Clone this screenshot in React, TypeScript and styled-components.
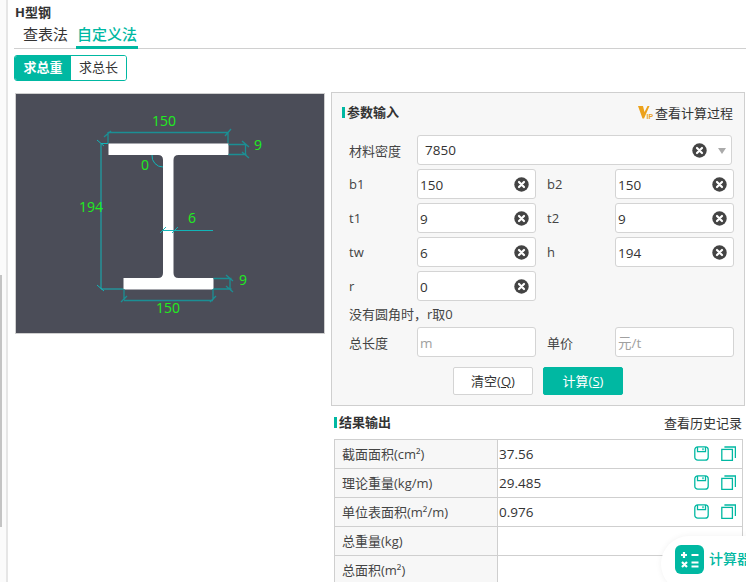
import React from 'react';
import styled, { createGlobalStyle } from 'styled-components';

const teal = '#00b8a2';
const dim = '#1b8f94';
const cyan = '#12b5b8';
const green = '#1fee1f';

const GlobalStyle = createGlobalStyle`
  html, body { margin: 0; padding: 0; background: #fff; }
  body { font-family: "Open Sans", "Noto Sans CJK SC", sans-serif; font-size: 13px; color: #333; }
  * { box-sizing: border-box; }
`;

const ClearIcon = () => (
  <svg width="15" height="15" viewBox="0 0 15 15">
    <circle cx="7.5" cy="7.5" r="7.2" fill="#444" />
    <path d="M5 5l5 5M10 5l-5 5" stroke="#fff" strokeWidth="2.2" strokeLinecap="round" />
  </svg>
);

const SaveIcon = () => (
  <svg width="15" height="15" viewBox="0 0 15 15" fill="none" stroke={teal} strokeWidth="1.3">
    <rect x="0.8" y="0.8" width="13.4" height="13.4" rx="3" />
    <path d="M3.500 1v4.600h8V1M9 2.200v2" />
  </svg>
);

const CopyIcon = () => (
  <svg width="15" height="15" viewBox="0 0 15 15" fill="none" stroke={teal} strokeWidth="1.3">
    <rect x="0.8" y="3.400" width="10.600" height="11" />
    <path d="M3.400 1h11v11" />
  </svg>
);

const VipLogo = () => (
  <svg width="18" height="18" viewBox="0 0 18 18">
    <path d="M2 3h5l1.500 6L11.500 3h2L8 15.500H6.500z" fill="#eca21c" />
    <text x="10.500" y="15.500" fontFamily="Liberation Sans" fontWeight="bold" fontSize="7" fill="#eca21c">IP</text>
  </svg>
);

const CalcIcon = () => (
  <svg width="29" height="29" viewBox="0 0 29 29">
    <rect width="29" height="29" rx="6" fill={teal} />
    <path d="M6 10h6M9 7v6M16.500 10h7M7 17l5 5M12 17l-5 5M16.500 17.500h7M16.500 21.500h7" stroke="#fff" strokeWidth="2.200" />
  </svg>
);

const SectionDiagram = () => (
  <DiagramSvg viewBox="0 0 308 239">
    <path
      d="M92.500 49.500H212.500V61H162.500q-5 0-5 5V179q0 5 5 5H197.500V195.500H107.500V184H142q5 0 5-5V66q0-5-5-5H92.500Z"
      fill="#fff"
    />
    <g fill="none" stroke={dim} strokeWidth="1.300">
      <path d="M92 38.500h120M92 38v11M212 38v11M88 43l7-6M209 42l6-7" />
      <path d="M212.500 50.500h18M212.500 60.500h18M229.500 50v11M226 47l7 6M226 58l7 6" />
      <path d="M197.500 184.500h18M197.500 195h18M214 184v11M210 181l7 6M210 192l7 6" />
      <path d="M108 206.500h89M108 195v11M197 195v11M105 208l6-6M194 208l6-6" />
    </g>
    <g fill="none" stroke={cyan} strokeWidth="1">
      <path d="M85 49.500v145.500M85 49.500h7M85 195h22M81 46l7 6M81 191l7 6" />
      <path d="M136 61a11 11 0 0 0 11 12" />
      <path d="M147 136.500h50M144 139l6-6M156 139l6-6" />
    </g>
    <g fontFamily="Open Sans" fontSize="14" fill={green}>
      <DimLabel x="136" y="32">150</DimLabel>
      <DimLabel x="238" y="56">9</DimLabel>
      <DimLabel x="125" y="75.500">0</DimLabel>
      <DimLabel x="63" y="118">194</DimLabel>
      <DimLabel x="172" y="128.700">6</DimLabel>
      <DimLabel x="223" y="191">9</DimLabel>
      <DimLabel x="140" y="218.700">150</DimLabel>
    </g>
  </DiagramSvg>
);

const Field = ({ value, placeholder }: { value?: string; placeholder?: string }) => (
  <InputBox>
    <Input value={value ?? ''} placeholder={placeholder} readOnly />
    {value && <ClearIcon />}
  </InputBox>
);

const results: [string, string][] = [
  ['截面面积(cm²)', '37.56'],
  ['理论重量(kg/m)', '29.485'],
  ['单位表面积(m²/m)', '0.976'],
  ['总重量(kg)', ''],
  ['总面积(m²)', ''],
];

const App = () => (
  <Page>
    <GlobalStyle />
    <Rail>
      <RailMark />
    </Rail>
    <Main>
      <Title>H型钢</Title>
      <Tabs>
        <Tab>查表法</Tab>
        <Tab $active>自定义法</Tab>
      </Tabs>
      <Toggle>
        <ToggleItem $active>求总重</ToggleItem>
        <ToggleItem>求总长</ToggleItem>
      </Toggle>
      <Columns>
        <Diagram>
          <SectionDiagram />
        </Diagram>
        <RightColumn>
          <InputPanel>
            <PanelHead>
              <Heading>参数输入</Heading>
              <HeadLink>
                <VipLogo />
                查看计算过程
              </HeadLink>
            </PanelHead>
            <SelectRow>
              <FieldLabel>材料密度</FieldLabel>
              <SelectBox>
                <SelectValue>7850</SelectValue>
                <ClearIcon />
                <Caret />
              </SelectBox>
            </SelectRow>
            <FieldGrid>
              <FieldLabel>b1</FieldLabel>
              <Field value="150" />
              <FieldLabel>b2</FieldLabel>
              <Field value="150" />
              <FieldLabel>t1</FieldLabel>
              <Field value="9" />
              <FieldLabel>t2</FieldLabel>
              <Field value="9" />
              <FieldLabel>tw</FieldLabel>
              <Field value="6" />
              <FieldLabel>h</FieldLabel>
              <Field value="194" />
              <FieldLabel>r</FieldLabel>
              <Field value="0" />
            </FieldGrid>
            <Note>没有圆角时，r取0</Note>
            <FieldGrid>
              <FieldLabel>总长度</FieldLabel>
              <Field placeholder="m" />
              <FieldLabel>单价</FieldLabel>
              <Field placeholder="元/t" />
            </FieldGrid>
            <Actions>
              <ActionButton>
                清空(<u>Q</u>)
              </ActionButton>
              <ActionButton $primary>
                计算(<u>S</u>)
              </ActionButton>
            </Actions>
          </InputPanel>
          <ResultHead>
            <Heading>结果输出</Heading>
            <HeadLink>查看历史记录</HeadLink>
          </ResultHead>
          <ResultTable>
            {results.map(([name, value]) => (
              <ResultRow key={name}>
                <ResultName>{name}</ResultName>
                <ResultValue>
                  <span>{value}</span>
                  {value && (
                    <RowTools>
                      <SaveIcon />
                      <CopyIcon />
                    </RowTools>
                  )}
                </ResultValue>
              </ResultRow>
            ))}
          </ResultTable>
        </RightColumn>
      </Columns>
    </Main>
    <CalcWidget>
      <CalcIcon />
      <CalcText>计算器</CalcText>
    </CalcWidget>
  </Page>
);

export default App;

const Page = styled.div`
  position: relative;
  display: flex;
  width: 746px;
  height: 582px;
  overflow: hidden;
`;
const Rail = styled.div`
  flex: 0 0 8px;
  padding-top: 275px;
  background: #fbfbfb;
  border-right: 2px solid #e6e6e6;
`;
const RailMark = styled.div`
  width: 2px;
  height: 252px;
  background: #c4c4c4;
`;
const Main = styled.div`
  flex: 1;
  min-width: 0;
  padding-left: 6px;
`;
const Title = styled.div`
  height: 21px;
  padding: 4px 0 0 1px;
  font-size: 13px;
  line-height: 17px;
  font-weight: 700;
  color: #333;
`;
const Tabs = styled.div`
  display: flex;
  gap: 7px;
  height: 28px;
  padding-left: 8px;
  border-bottom: 1px solid #d0d0d0;
`;
const Tab = styled.div<{ $active?: boolean }>`
  height: 28px;
  font-size: 15px;
  line-height: 27px;
  font-weight: ${(p) => (p.$active ? 500 : 400)};
  color: ${(p) => (p.$active ? teal : '#333')};
  border-bottom: ${(p) => (p.$active ? `3px solid ${teal}` : 'none')};
  padding: 0 1px;
`;
const Toggle = styled.div`
  display: inline-flex;
  height: 26px;
  margin-top: 6px;
  border: 1px solid ${teal};
  border-radius: 3px;
  overflow: hidden;
`;
const ToggleItem = styled.div<{ $active?: boolean }>`
  width: ${(p) => (p.$active ? 56 : 55)}px;
  text-align: center;
  font-size: 13px;
  line-height: 23px;
  font-weight: ${(p) => (p.$active ? 700 : 400)};
  color: ${(p) => (p.$active ? '#fff' : '#333')};
  background: ${(p) => (p.$active ? teal : '#fff')};
`;
const Columns = styled.div`
  display: flex;
  align-items: flex-start;
  gap: 6px;
  margin-top: 11px;
`;
const Diagram = styled.div`
  width: 310px;
  height: 241px;
  margin: 1px 0 0 1px;
  background: #4b4d58;
  border: 1px solid #cfcfcf;
`;
const DiagramSvg = styled.svg`
  display: block;
  width: 308px;
  height: 239px;
`;
const DimLabel = styled.text``;
const RightColumn = styled.div`
  flex: 0 0 414px;
`;
const InputPanel = styled.div`
  height: 314px;
  padding: 0 10px 0 17px;
  background: #f7f7f7;
  border: 1px solid #cfcfcf;
`;
const PanelHead = styled.div`
  display: flex;
  align-items: center;
  justify-content: space-between;
  height: 42px;
  margin-left: -7px;
  padding: 0 1px 4px 0;
`;
const Heading = styled.div`
  padding-left: 5px;
  font-size: 13px;
  line-height: 14px;
  font-weight: 700;
  color: #333;
  background: linear-gradient(${teal}, ${teal}) left center / 3px 11px no-repeat;
`;
const HeadLink = styled.div`
  display: flex;
  align-items: center;
  gap: 1px;
  font-size: 13px;
  color: #333;
`;
const SelectRow = styled.div`
  display: flex;
  align-items: center;
  height: 30px;
`;
const FieldLabel = styled.div`
  width: 68px;
  font-size: 13px;
  color: #444;
`;
const SelectBox = styled.div`
  display: flex;
  align-items: center;
  width: 315px;
  height: 30px;
  padding: 0 5px 0 7px;
  background: #fff;
  border: 1px solid #d4d4d4;
  border-radius: 3px;
`;
const SelectValue = styled.div`
  flex: 1;
  font-size: 13.500px;
`;
const Caret = styled.div`
  margin: 1px 0 0 11px;
  border: 4px solid transparent;
  border-top: 6px solid #aaa;
  border-bottom: 0;
`;
const FieldGrid = styled.div`
  display: grid;
  grid-template-columns: 68px 119px 79px 119px;
  grid-auto-rows: 30px;
  row-gap: 4px;
  align-items: center;
  margin-top: 4px;
  & > div:nth-child(4n + 3) {
    padding-left: 11px;
  }
`;
const InputBox = styled.div`
  display: flex;
  align-items: center;
  height: 30px;
  padding: 0 6px 0 2px;
  background: #fff;
  border: 1px solid #d4d4d4;
  border-radius: 3px;
`;
const Input = styled.input`
  flex: 1;
  min-width: 0;
  padding: 2px 0 0;
  border: 0;
  outline: 0;
  background: transparent;
  font: inherit;
  font-size: 13.500px;
  color: #333;
  &::placeholder {
    color: #a0a0a0;
    opacity: 1;
  }
`;
const Note = styled.div`
  height: 19px;
  margin-top: 3px;
  font-size: 13px;
  line-height: 20px;
  color: #444;
`;
const Actions = styled.div`
  display: flex;
  justify-content: center;
  gap: 10px;
  margin: 10px 0 0 -19px;
  padding-left: 12px;
`;
const ActionButton = styled.button<{ $primary?: boolean }>`
  width: 80px;
  height: 28px;
  padding: 0 0 2px;
  border: 1px solid ${(p) => (p.$primary ? teal : '#d4d4d4')};
  border-radius: 2px;
  font: inherit;
  font-size: 13px;
  color: ${(p) => (p.$primary ? '#fff' : '#333')};
  background: ${(p) => (p.$primary ? teal : '#fff')};
`;
const ResultHead = styled.div`
  display: flex;
  align-items: center;
  justify-content: space-between;
  height: 33px;
  padding: 0 3px 1px 3px;
`;
const ResultTable = styled.div`
  width: 409px;
  margin-left: 3px;
  border-top: 1px solid #cfcfcf;
  border-left: 1px solid #cfcfcf;
  border-right: 1px solid #cfcfcf;
`;
const ResultRow = styled.div`
  display: flex;
  height: 29px;
  border-bottom: 1px solid #cfcfcf;
`;
const ResultName = styled.div`
  flex: 0 0 163px;
  padding-left: 7px;
  font-size: 13px;
  line-height: 28px;
  color: #444;
  background: #f7f7f7;
  border-right: 1px solid #cfcfcf;
`;
const ResultValue = styled.div`
  flex: 1;
  display: flex;
  align-items: center;
  justify-content: space-between;
  padding: 0 6px 0 1px;
  font-size: 13.500px;
`;
const RowTools = styled.div`
  display: flex;
  gap: 12px;
  margin-top: -2px;
`;
const CalcWidget = styled.div`
  position: absolute;
  left: 661px;
  top: 536px;
  display: flex;
  align-items: center;
  gap: 5px;
  width: 120px;
  height: 56px;
  padding: 0 0 10px 14px;
  background: #fff;
  border-radius: 28px;
  box-shadow: 0 0 6px rgba(0, 0, 0, 0.06);
`;
const CalcText = styled.div`
  font-size: 14px;
  font-weight: 500;
  white-space: nowrap;
  margin-top: -3px;
  color: ${teal};
`;
